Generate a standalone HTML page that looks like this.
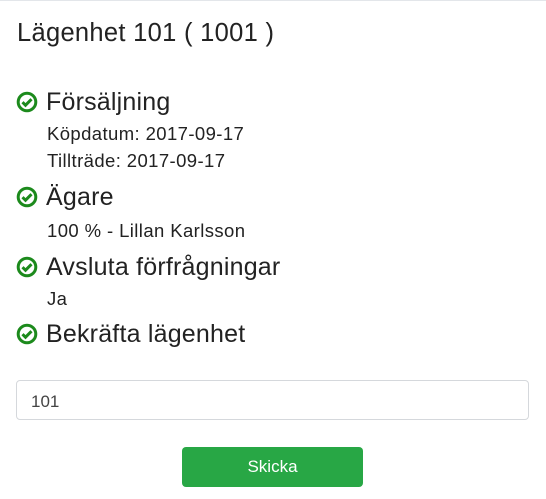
<!DOCTYPE html>
<html><head><meta charset="utf-8"><style>
body{margin:0;width:546px;height:499px;background:#fff;font-family:"Liberation Sans",sans-serif;color:#222;position:relative;overflow:hidden;border-top:1px solid #e3e6ea;box-sizing:border-box}
.t{position:absolute;line-height:1;white-space:nowrap}
.h{font-size:25px;left:46px;letter-spacing:0.2px}
.s{font-size:18.5px;left:47px;letter-spacing:0.4px}
svg{position:absolute;left:16px}
.inp{position:absolute;left:16px;top:379px;width:511px;height:38px;border:1px solid #d5d8dc;border-radius:4px}
.inp span{position:absolute;left:14px;top:11px;font-size:17px;color:#444}
.btn{position:absolute;left:182px;top:446px;width:181px;height:40px;background:#28a745;border-radius:4px;color:#fff;font-size:17px;text-align:center;line-height:40px}
</style></head><body>
<div class="t" style="left:17px;top:20px;font-size:25.5px;letter-spacing:0.3px">Lägenhet 101 ( 1001 )</div>
<svg width="22" height="22" style="top:90px" viewBox="0 0 22 22"><circle cx="11" cy="11" r="8.8" fill="none" stroke="#1c8a1c" stroke-width="3"/><path d="M6.5 11.2l3 3 6-6" fill="none" stroke="#1c8a1c" stroke-width="3"/></svg>
<div class="t h" style="top:89px">Försäljning</div>
<div class="t s" style="top:124px">Köpdatum: 2017-09-17</div>
<div class="t s" style="top:151px">Tillträde: 2017-09-17</div>
<svg width="22" height="22" style="top:185px" viewBox="0 0 22 22"><circle cx="11" cy="11" r="8.8" fill="none" stroke="#1c8a1c" stroke-width="3"/><path d="M6.5 11.2l3 3 6-6" fill="none" stroke="#1c8a1c" stroke-width="3"/></svg>
<div class="t h" style="top:184px">Ägare</div>
<div class="t s" style="top:221px">100 % - Lillan Karlsson</div>
<svg width="22" height="22" style="top:255px" viewBox="0 0 22 22"><circle cx="11" cy="11" r="8.8" fill="none" stroke="#1c8a1c" stroke-width="3"/><path d="M6.5 11.2l3 3 6-6" fill="none" stroke="#1c8a1c" stroke-width="3"/></svg>
<div class="t h" style="top:254px">Avsluta förfrågningar</div>
<div class="t s" style="top:289px">Ja</div>
<svg width="22" height="22" style="top:322px" viewBox="0 0 22 22"><circle cx="11" cy="11" r="8.8" fill="none" stroke="#1c8a1c" stroke-width="3"/><path d="M6.5 11.2l3 3 6-6" fill="none" stroke="#1c8a1c" stroke-width="3"/></svg>
<div class="t h" style="top:321px">Bekräfta lägenhet</div>
<div class="inp"><span>101</span></div>
<div class="btn">Skicka</div>
</body></html>
